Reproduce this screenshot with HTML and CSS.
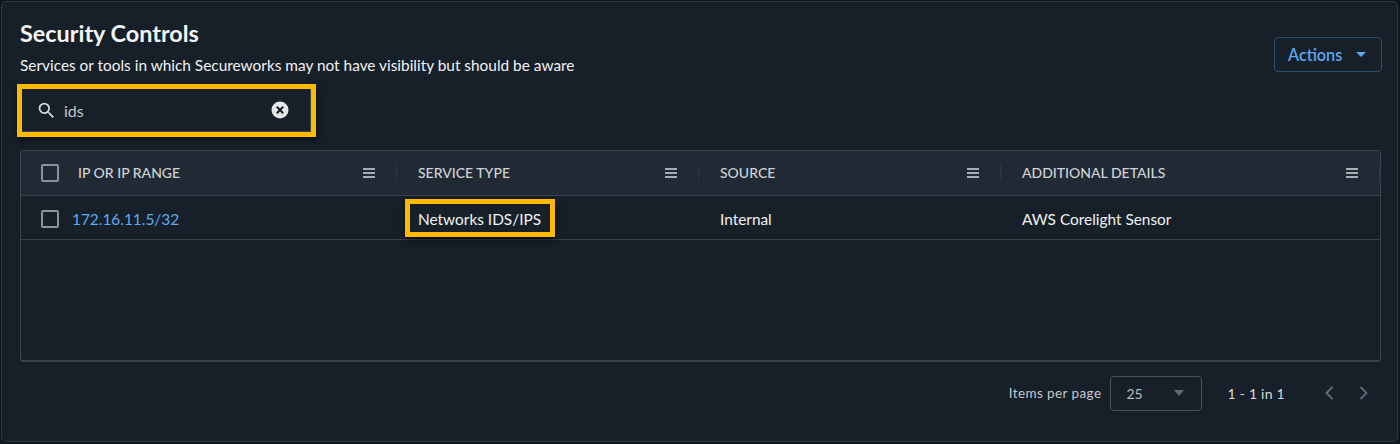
FILE: index.html

```html
<!DOCTYPE html>
<html lang="en">
<head>
  <meta charset="UTF-8">
  <title>Security Controls</title>
  <link rel="stylesheet" href="styles.css">
</head>
<body>
  <div class="card">
    <div class="card-head">
      <div class="card-title">
        <h1>Security Controls</h1>
        <p>Services or tools in which Secureworks may not have visibility but should be aware</p>
      </div>
      <button class="actions-btn">Actions <span class="caret"></span></button>
    </div>

    <div class="search-mark">
      <div class="search">
        <svg class="search-icon" width="21" height="21" viewBox="0 0 24 24"><path d="M15.5 14h-.79l-.28-.27A6.47 6.47 0 0 0 16 9.5 6.5 6.5 0 1 0 9.5 16c1.61 0 3.09-.59 4.23-1.57l.27.28v.79l5 4.99L20.49 19l-4.99-5zm-6 0C7.01 14 5 11.99 5 9.5S7.01 5 9.5 5 14 7.01 14 9.5 11.99 14 9.5 14z"/></svg>
        <span class="search-text">ids</span>
        <svg class="clear-icon" width="20" height="20" viewBox="0 0 20 20"><circle cx="10" cy="10" r="8.5" fill="#e4e6e8"/><path d="M6.8 6.8l6.4 6.4M13.2 6.8l-6.4 6.4" stroke="#18202a" stroke-width="2" fill="none"/></svg>
      </div>
    </div>

    <div class="table">
      <div class="row row-head">
        <div class="cell cell-first">
          <span class="check"></span>
          <span class="head-label">IP OR IP RANGE</span>
          <svg class="menu-icon" width="12" height="10" viewBox="0 0 12 10"><path d="M0 1h12M0 5h12M0 9h12" stroke="#d5d9dd" stroke-width="1.3"/></svg>
        </div>
        <div class="cell cell-b">
          <span class="head-label">SERVICE TYPE</span>
          <svg class="menu-icon" width="12" height="10" viewBox="0 0 12 10"><path d="M0 1h12M0 5h12M0 9h12" stroke="#d5d9dd" stroke-width="1.3"/></svg>
        </div>
        <div class="cell cell-c">
          <span class="head-label">SOURCE</span>
          <svg class="menu-icon" width="12" height="10" viewBox="0 0 12 10"><path d="M0 1h12M0 5h12M0 9h12" stroke="#d5d9dd" stroke-width="1.3"/></svg>
        </div>
        <div class="cell cell-d">
          <span class="head-label">ADDITIONAL DETAILS</span>
          <svg class="menu-icon" width="12" height="10" viewBox="0 0 12 10"><path d="M0 1h12M0 5h12M0 9h12" stroke="#d5d9dd" stroke-width="1.3"/></svg>
        </div>
      </div>
      <div class="row row-body">
        <div class="cell cell-first">
          <span class="check"></span>
          <a class="ip-link" href="#">172.16.11.5/32</a>
        </div>
        <div class="cell cell-b"><span class="marked">Networks IDS/IPS</span></div>
        <div class="cell cell-c">Internal</div>
        <div class="cell cell-d">AWS Corelight Sensor</div>
      </div>
    </div>

    <div class="pager">
      <span class="pager-label">Items per page</span>
      <div class="page-select">25 <span class="select-caret"></span></div>
      <span class="page-count">1 - 1 in 1</span>
      <svg class="page-arrow" width="12" height="16" viewBox="0 0 12 16"><path d="M9.5 2L3.5 8l6 6" stroke="#5f6974" stroke-width="2" fill="none"/></svg>
      <svg class="page-arrow" width="12" height="16" viewBox="0 0 12 16"><path d="M2.5 2l6 6-6 6" stroke="#5f6974" stroke-width="2" fill="none"/></svg>
    </div>
  </div>
</body>
</html>
```

FILE: styles.css

```css
html, body {
  margin: 0;
  padding: 0;
  width: 1400px;
  height: 444px;
  background-color: #10161d;
  font-family: Lato, "Liberation Sans", sans-serif;
  color: #eef0f2;
  overflow: hidden;
}
.card {
  width: 1397px;
  height: 441px;
  margin: 1px 0 0 1px;
  padding: 0 15px 0 18px;
  box-sizing: border-box;
  background-color: #171f29;
  border: 1px solid #2f3841;
  border-radius: 5px;
}
.card-head {
  display: flex;
  justify-content: space-between;
  align-items: flex-start;
  height: 82px;
}
.card-title h1 {
  margin: 17px 0 0;
  font-size: 23.4px;
  line-height: 28px;
  font-weight: 700;
  color: #f4f5f6;
}
.card-title p {
  margin: 8px 0 0;
  font-size: 15.4px;
  line-height: 20px;
  color: #f0f2f3;
}
.actions-btn {
  display: flex;
  align-items: center;
  width: 108px;
  height: 35px;
  margin-top: 35px;
  padding: 0 0 0 13px;
  box-sizing: border-box;
  background: transparent;
  border: 1px solid #2b4d70;
  border-radius: 4px;
  color: #5ba8ec;
  font-family: inherit;
  font-size: 16.2px;
  font-weight: 600;
}
.caret {
  width: 0;
  height: 0;
  margin-left: 14px;
  border-left: 5px solid transparent;
  border-right: 5px solid transparent;
  border-top: 5px solid #5ba8ec;
}
.search-mark {
  width: 299px;
  height: 53px;
  margin-left: -3px;
  box-sizing: border-box;
  border: 5px solid #fbb900;
  box-shadow: 1px 3px 6px rgba(0, 0, 0, 0.6);
}
.search {
  display: flex;
  align-items: center;
  height: 100%;
  padding: 0 20px 0 14px;
  box-sizing: border-box;
  border-right: 1px solid #3c4650;
  border-bottom: 1px solid #3c4650;
}
.search-icon {
  fill: #d5d9dd;
  flex: none;
}
.search-text {
  flex: 1;
  margin-left: 7px;
  font-size: 16px;
  color: #c3c8cd;
}
.table {
  width: 1361px;
  height: 212px;
  margin-top: 13px;
  box-sizing: border-box;
  border: 1px solid #39424b;
  border-bottom-width: 2px;
  border-radius: 3px;
}
.row {
  display: flex;
  align-items: center;
  box-sizing: border-box;
  border-bottom: 1px solid #39424b;
}
.row-head {
  height: 45px;
  padding-bottom: 1px;
  background-color: #212a34;
}
.row-body {
  height: 44px;
  padding-top: 2px;
  font-size: 15.4px;
  color: #f0f2f3;
}
.cell {
  display: flex;
  align-items: center;
  box-sizing: border-box;
  height: 100%;
}
.cell-first {
  width: 376px;
  padding-left: 20px;
}
.cell-b {
  width: 302px;
  padding-left: 21px;
}
.cell-c {
  width: 302px;
  padding-left: 21px;
}
.cell-d {
  flex: 1;
  padding-left: 21px;
}
.row-head .cell {
  position: relative;
}
/* little divider at the right end of each head cell */
.row-head .cell::after {
  content: "";
  position: absolute;
  right: 0;
  top: 14px;
  width: 1px;
  height: 15px;
  background-color: #2f3841;
}
.check {
  width: 14px;
  height: 14px;
  flex: none;
  border: 2px solid #8b9299;
  border-radius: 2px;
}
.head-label {
  flex: 1;
  font-size: 14px;
  font-weight: 500;
  letter-spacing: 0;
  color: #cfd3d7;
}
.cell-first .head-label {
  padding-left: 19px;
}
.menu-icon {
  flex: none;
  margin-right: 22px;
}
.ip-link {
  margin-left: 13px;
  color: #5dabf0;
  font-size: 15.4px;
  text-decoration: none;
}
.marked {
  position: relative;
}
/* yellow annotation box drawn over the cell */
.marked::after {
  content: "";
  position: absolute;
  left: -13px;
  right: -14px;
  top: -11px;
  bottom: -9px;
  border: 5px solid #fbb900;
  box-shadow: 1px 3px 6px rgba(0, 0, 0, 0.6);
}
.pager {
  display: flex;
  align-items: center;
  justify-content: flex-end;
  height: 36px;
  margin-top: 13px;
  padding-right: 12px;
  font-size: 13.5px;
  color: #c3c8cd;
}
.pager-label {
  letter-spacing: 0.4px;
}
.page-select {
  display: flex;
  align-items: center;
  justify-content: space-between;
  width: 92px;
  height: 35px;
  margin-left: 9px;
  padding: 0 17px 0 15px;
  box-sizing: border-box;
  border: 1px solid #4a535c;
  border-radius: 4px;
  font-size: 14px;
  color: #b7bcc1;
}
.select-caret {
  width: 0;
  height: 0;
  border-left: 5.5px solid transparent;
  border-right: 5.5px solid transparent;
  border-top: 6px solid #5f6974;
}
.page-count {
  margin: 0 38px 0 25px;
  font-size: 14px;
  letter-spacing: 0.25px;
  color: #d5d9dd;
}
.page-arrow + .page-arrow {
  margin-left: 23px;
}
```
